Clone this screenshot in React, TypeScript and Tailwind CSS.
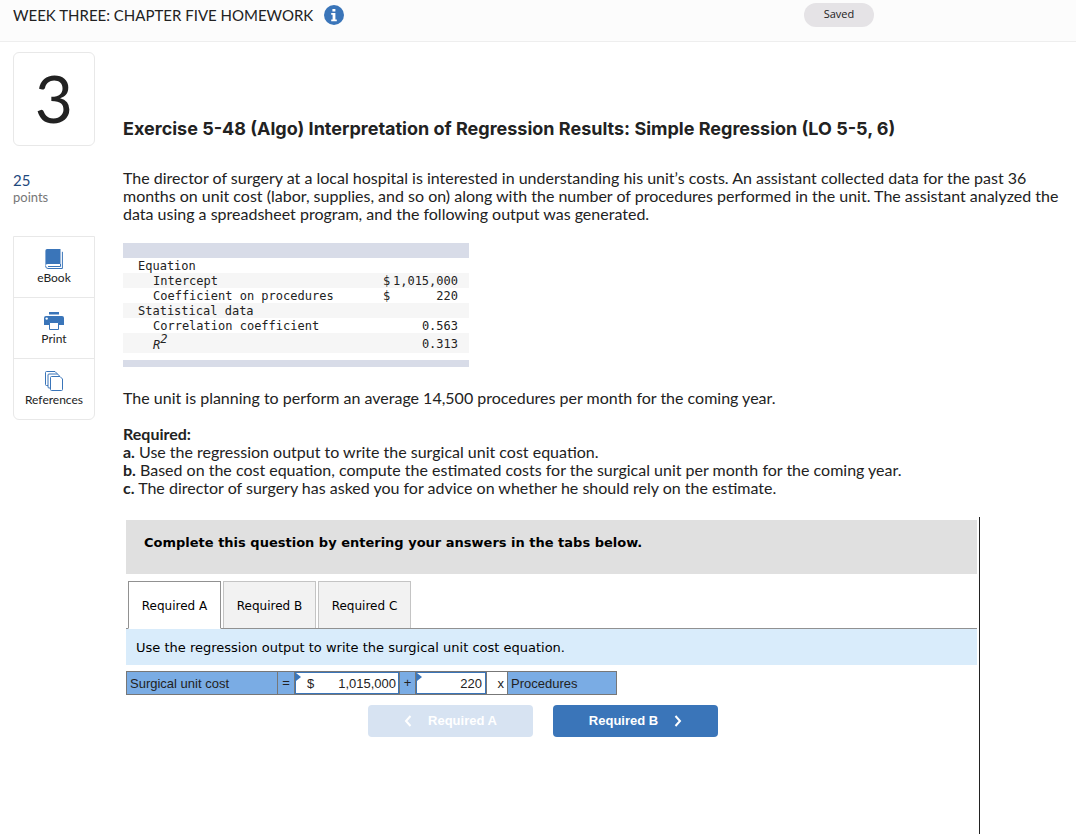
import React, { useState } from 'react';

const tools = [
  { id: 'ebook', label: 'eBook', icon: BookIcon },
  { id: 'print', label: 'Print', icon: PrintIcon },
  { id: 'references', label: 'References', icon: PagesIcon },
];

const outputRows = [
  { label: 'Equation', indent: false, currency: '', value: '' },
  { label: 'Intercept', indent: true, currency: '$', value: '1,015,000' },
  { label: 'Coefficient on procedures', indent: true, currency: '$', value: '220' },
  { label: 'Statistical data', indent: false, currency: '', value: '' },
  { label: 'Correlation coefficient', indent: true, currency: '', value: '0.563' },
];

const tabs = ['Required A', 'Required B', 'Required C'];

function InfoIcon() {
  return (
    <svg width="20" height="20" viewBox="0 0 20 20" aria-hidden="true">
      <circle cx="10" cy="10" r="10" fill="#3a75b9" />
      <path d="M8.4 4h3v2.6h-3zM7.2 8h4.2v6.4h1.4v1.8H7.2v-1.8h1.4V9.8H7.2z" fill="#fff" />
    </svg>
  );
}

function BookIcon() {
  return (
    <svg width="18" height="20" viewBox="0 0 18 20" aria-hidden="true">
      <path d="M2 0h13.5v15H3q-1.6 0-2.6 1.2V1.8Q.4 0 2 0z" fill="#3a75b9" />
      <path d="M.5 16.5Q.5 19.5 3 19.5H17.4V2.8" fill="none" stroke="#3a75b9" />
      <path d="M3 17.5h12.5V15" fill="none" stroke="#3a75b9" />
    </svg>
  );
}

function PrintIcon() {
  return (
    <svg width="20" height="18" viewBox="0 0 20 18" aria-hidden="true">
      <path d="M5 0h10v2.6H5zM2 4h16q2 0 2 2v7H0V6q0-2 2-2z" fill="#3a75b9" />
      <circle cx="2.7" cy="6.6" r="1.2" fill="#fff" />
      <path d="M5.5 10.5h9v7h-9z" fill="#fff" stroke="#3a75b9" />
    </svg>
  );
}

function PagesIcon() {
  return (
    <svg width="18" height="20" viewBox="0 0 18 20" fill="#fff" stroke="#3a75b9" aria-hidden="true">
      <path d="M.5 1.5q0-1 1-1H10l2 2V14.500H1.500q-1 0-1-1z" />
      <path d="M3 4q0-1 1-1h8.500l2 2v12H4q-1 0-1-1z" />
      <path d="M5.500 6.500q0-1 1-1H15l2.500 2.500v10.500q0 1-1 1h-10q-1 0-1-1z" />
    </svg>
  );
}

function Chevron({ flip = false }: { flip?: boolean }) {
  return (
    <svg width="8" height="12" viewBox="0 0 8 12" fill="none" stroke="currentColor" strokeWidth="2" aria-hidden="true">
      <path d={flip ? 'M6.500 1 2 6l4.500 5' : 'M1.500 1 6 6l-4.500 5'} />
    </svg>
  );
}

function Corner() {
  return (
    <svg className="absolute left-0 top-0" width="5" height="8" viewBox="0 0 5 8" aria-hidden="true">
      <path d="M0 0l5 4-5 4z" fill="#3a75b9" />
    </svg>
  );
}

export default function App() {
  const [tab, setTab] = useState('Required A');
  const [fixed, setFixed] = useState('1,015,000');
  const [variable, setVariable] = useState('220');

  return (
    <div className="min-h-screen overflow-hidden bg-white font-['Lato',sans-serif] text-[#222]">
      <header className="flex h-[42px] border-b border-[#eee] bg-[#fcfcfc] pl-[13px]">
        <div className="flex h-[30px] flex-1 items-center gap-[11px]">
          <h1 className="pb-px text-[15px] leading-[18px]">WEEK THREE: CHAPTER FIVE HOMEWORK</h1>
          <button aria-label="Information"><InfoIcon /></button>
        </div>
        <span className="mr-[202px] mt-[3px] h-6 w-[70px] rounded-full bg-[#e5e3e6] text-center font-['Open_Sans',sans-serif] text-[11px] leading-[22px]">
          Saved
        </span>
      </header>

      <div className="flex min-h-[792px] gap-7 pl-[13px]">
        <aside className="w-[82px] shrink-0 pt-[10px]">
          <div className="flex h-[94px] items-center justify-center rounded-md border border-[#e8e8e8] pb-[2px] text-[66px] leading-none">3</div>
          <div className="mt-[25px] text-[15px] leading-[18px] text-[#1f497d]">25</div>
          <div className="text-[13px] leading-4 text-[#777]">points</div>
          <nav className="mt-[31px] divide-y divide-[#e8e8e8] rounded-b-md border border-[#e8e8e8]">
            {tools.map(t => (
              <button key={t.id} className="flex h-[61px] w-full flex-col items-center justify-end gap-px pb-[11px] text-xs leading-4 last:h-[60px]">
                <t.icon />
                {t.label}
              </button>
            ))}
          </nav>
        </aside>

        <main className="flex min-w-0 flex-1 flex-col text-[16px] leading-[18px]">
          <h2 className="mt-[75px] font-['Inter',sans-serif] text-[18px] font-bold leading-6">
            Exercise 5-48 (Algo) Interpretation of Regression Results: Simple Regression (LO 5-5, 6)
          </h2>
          <p className="mr-2 mt-[28px]">
            The director of surgery at a local hospital is interested in understanding his unit’s costs. An assistant collected data for the past 36
            months on unit cost (labor, supplies, and so on) along with the number of procedures performed in the unit. The assistant analyzed the
            data using a spreadsheet program, and the following output was generated.
          </p>

          <table className="mt-5 w-[346px] border-collapse font-['DejaVu_Sans_Mono',monospace] text-xs leading-[13px]">
            <thead>
              <tr className="h-[15px] bg-[#d8dce8]"><td colSpan={3} /></tr>
            </thead>
            <tbody>
              {outputRows.map(r => (
                <tr key={r.label} className="h-[15px] even:bg-[#f6f6f6] [&>td]:pt-[2px]">
                  <td className={r.indent ? 'p-0 pl-[30px]' : 'p-0 pl-[15px]'}>{r.label}</td>
                  <td className="p-0">{r.currency}</td>
                  <td className="p-0 pr-[11px] text-right">{r.value}</td>
                </tr>
              ))}
              <tr className="h-5 bg-[#f6f6f6] [&>td]:pt-[2px]">
                <td className="p-0 pl-[30px] align-bottom italic">R<sup className="text-xs">2</sup></td>
                <td className="w-2 p-0" />
                <td className="w-[78px] p-0 pr-[11px] text-right">0.313</td>
              </tr>
            </tbody>
          </table>
          <div className="mt-[7px] h-[7px] w-[346px] bg-[#d8dce8]" />

          <p className="mt-[22px]">The unit is planning to perform an average 14,500 procedures per month for the coming year.</p>
          <div className="mt-[18px]">
            <p className="font-bold">Required:</p>
            <p><b>a.</b> Use the regression output to write the surgical unit cost equation.</p>
            <p><b>b.</b> Based on the cost equation, compute the estimated costs for the surgical unit per month for the coming year.</p>
            <p><b>c.</b> The director of surgery has asked you for advice on whether he should rely on the estimate.</p>
          </div>

          <section className="ml-[3px] mr-24 mt-5 flex-1 border-r border-[#222] pr-[2px] pt-[3px] font-['DejaVu_Sans',sans-serif] text-[13px] text-black">
            <div className="h-[54px] bg-[#e0e0e0] px-[18px] pt-[14px] font-bold">
              Complete this question by entering your answers in the tabs below.
            </div>
            <div className="mt-[7px] flex gap-[2px] border-b border-[#919191] pl-[2px]" role="tablist">
              {tabs.map(t => (
                <button
                  key={t}
                  role="tab"
                  aria-selected={tab === t}
                  onClick={() => setTab(t)}
                  className={`w-[93px] border pt-[2px] text-xs ${
                    tab === t ? '-mb-px h-12 border-[#919191] border-b-white bg-white' : 'h-[47px] border-b-0 border-[#c4c4c4] bg-[#f2f2f2]'
                  }`}
                >
                  {t}
                </button>
              ))}
            </div>
            <p className="bg-[#d9ecfb] px-[10px] pb-2 pt-[10px]">Use the regression output to write the surgical unit cost equation.</p>

            <table className="mt-[6px] w-[491px] table-fixed border-collapse font-['Liberation_Sans',sans-serif] text-[13px] leading-4 text-[#222]">
              <tbody>
                <tr className="h-[23px] bg-[#7aace4] [&>td]:border [&>td]:border-[#777] [&>td]:p-0">
                  <td className="w-[151px]"><span className="block pl-[3px] pt-px">Surgical unit cost</span></td>
                  <td className="w-[17px] text-center">=</td>
                  <td className="w-[105px] bg-white">
                    <label className="relative flex h-[22px] items-center border border-[#3a75b9] pt-px">
                      <Corner />
                      <span className="pl-[11px]">$</span>
                      <input aria-label="Fixed cost" value={fixed} onChange={e => setFixed(e.target.value)} className="w-full min-w-0 pr-[2px] text-right outline-none" />
                    </label>
                  </td>
                  <td className="w-4 text-center">+</td>
                  <td className="w-[71px] bg-white">
                    <label className="relative flex h-[22px] items-center border border-[#3a75b9] pt-px">
                      <Corner />
                      <input aria-label="Cost per procedure" value={variable} onChange={e => setVariable(e.target.value)} className="w-full min-w-0 pr-[3px] text-right outline-none" />
                    </label>
                  </td>
                  <td className="w-[21px] bg-white text-right"><span className="block pr-[3px] pt-px">x</span></td>
                  <td><span className="block pl-[3px] pt-px">Procedures</span></td>
                </tr>
              </tbody>
            </table>

            <div className="mt-[10px] flex justify-center gap-5 pr-[17px] font-['Liberation_Sans',sans-serif] font-bold text-white">
              <button disabled className="flex h-8 w-[165px] items-center justify-center gap-4 rounded-sm bg-[#d7e3f2]">
                <Chevron flip />
                Required A
              </button>
              <button onClick={() => setTab('Required B')} className="flex h-8 w-[165px] items-center justify-center gap-4 rounded-sm bg-[#3a75b9]">
                Required B
                <Chevron />
              </button>
            </div>
          </section>
        </main>
      </div>
    </div>
  );
}
